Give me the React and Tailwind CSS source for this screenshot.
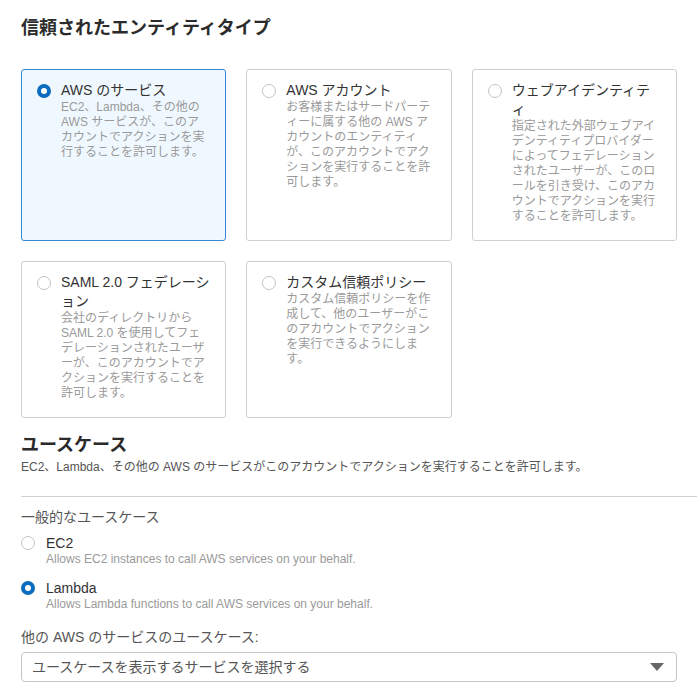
import React, { useState } from 'react';

const entityTypes = [
  {
    id: 'aws-service',
    title: 'AWS のサービス',
    desc: 'EC2、Lambda、その他の AWS サービスが、このアカウントでアクションを実行することを許可します。',
  },
  {
    id: 'aws-account',
    title: 'AWS アカウント',
    desc: 'お客様またはサードパーティーに属する他の AWS アカウントのエンティティが、このアカウントでアクションを実行することを許可します。',
  },
  {
    id: 'web-identity',
    title: 'ウェブアイデンティティ',
    desc: '指定された外部ウェブアイデンティティプロバイダーによってフェデレーションされたユーザーが、このロールを引き受け、このアカウントでアクションを実行することを許可します。',
  },
  {
    id: 'saml',
    title: 'SAML 2.0 フェデレーション',
    desc: '会社のディレクトリから SAML 2.0 を使用してフェデレーションされたユーザーが、このアカウントでアクションを実行することを許可します。',
  },
  {
    id: 'custom',
    title: 'カスタム信頼ポリシー',
    desc: 'カスタム信頼ポリシーを作成して、他のユーザーがこのアカウントでアクションを実行できるようにします。',
  },
];

const useCases = [
  { id: 'ec2', label: 'EC2', desc: 'Allows EC2 instances to call AWS services on your behalf.' },
  { id: 'lambda', label: 'Lambda', desc: 'Allows Lambda functions to call AWS services on your behalf.' },
];

const Radio = ({ checked }) =>
  checked ? (
    <span className="block w-[14px] h-[14px] shrink-0 rounded-full border-[4px] border-[#0b6cc0] bg-white" />
  ) : (
    <span className="block w-[14px] h-[14px] shrink-0 rounded-full border border-[#c3c3c3] bg-white" />
  );

const EntityCard = ({ item, selected, onSelect }) => (
  <div
    onClick={onSelect}
    className={
      selected
        ? 'flex gap-[10px] rounded-[3px] border border-[#3b87d4] bg-[#f0f8ff] pl-[15px] pt-[11px] pb-4 cursor-pointer'
        : 'flex gap-[10px] rounded-[3px] border border-[#cfcfcf] bg-white pl-[15px] pt-[11px] pb-4 cursor-pointer'
    }
  >
    <div className="mt-[3px]">
      <Radio checked={selected} />
    </div>
    <div className="w-[150px]">
      <div className="text-[14px] leading-[19px] text-[#333]">{item.title}</div>
      <div className="pr-[3px] text-[12px] leading-[15px] text-[#9a9a9a]">{item.desc}</div>
    </div>
  </div>
);

export default function App() {
  const [entity, setEntity] = useState('aws-service');
  const [useCase, setUseCase] = useState('lambda');

  return (
    <div className="min-h-screen bg-white pl-[21px] pr-5 pt-4 font-['Liberation_Sans','Noto_Sans_CJK_JP',sans-serif] overflow-hidden">
      <h1 className="text-[18px] leading-6 font-bold text-[#2b2b2b]">信頼されたエンティティタイプ</h1>

      <div className="mt-[29px] grid grid-cols-3 gap-5">
        {entityTypes.map((item) => (
          <EntityCard
            key={item.id}
            item={item}
            selected={entity === item.id}
            onSelect={() => setEntity(item.id)}
          />
        ))}
      </div>

      <h2 className="mt-[15px] text-[18px] leading-6 font-bold text-[#2b2b2b]">ユースケース</h2>
      <p className="mt-[3px] text-[12px] leading-[15px] text-[#555]">
        EC2、Lambda、その他の AWS のサービスがこのアカウントでアクションを実行することを許可します。
      </p>

      <div className="mt-[21px] -mr-5 border-t border-[#d0d0d0]" />

      <div className="mt-[10px] text-[14px] leading-5 text-[#555]">一般的なユースケース</div>

      <div className="mt-[7px] flex flex-col gap-[12px]">
        {useCases.map((uc) => (
          <div key={uc.id} className="flex gap-[11px] cursor-pointer" onClick={() => setUseCase(uc.id)}>
            <div className="mt-[2px]">
              <Radio checked={useCase === uc.id} />
            </div>
            <div>
              <div className="text-[14px] leading-[18px] text-[#333]">{uc.label}</div>
              <div className="text-[12px] leading-[15px] text-[#9a9a9a]">{uc.desc}</div>
            </div>
          </div>
        ))}
      </div>

      <div className="mt-[15px] text-[14px] leading-5 text-[#555]">他の AWS のサービスのユースケース:</div>

      <div className="mt-[5px] flex h-[30px] items-center justify-between rounded-[4px] border border-[#c6c6c6] bg-white pl-[10px] pr-[12px] cursor-pointer">
        <span className="text-[14px] text-[#555]">ユースケースを表示するサービスを選択する</span>
        <svg width="14" height="8" viewBox="0 0 14 8" className="shrink-0">
          <path d="M0 0 H14 L7 8 Z" fill="#666" />
        </svg>
      </div>
    </div>
  );
}
